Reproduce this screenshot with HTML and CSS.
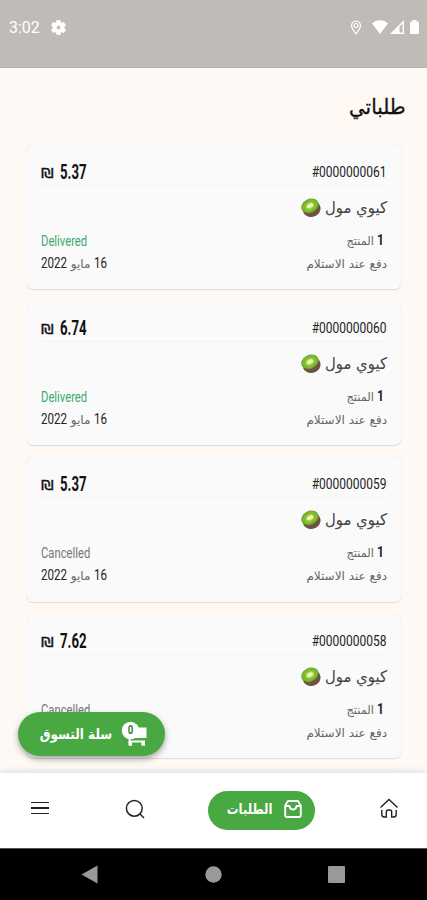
FILE: index.html
```html
<!DOCTYPE html>
<html lang="ar" dir="rtl">
<head>
  <meta charset="UTF-8" />
  <title>طلباتي</title>
  <link rel="stylesheet" href="styles.css">
</head>
<body>
  <svg class="defs" width="0" height="0">
    <defs>
      <symbol id="kiwi" viewBox="0 0 20 20">
        <path fill="#705044" d="M2 14c2 4 6 5.500 10 4.800 5-.800 7.800-5 7.500-9-.200-2-1-3.500-2.500-4.800z" />
        <ellipse cx="9" cy="8" rx="9" ry="7" transform="rotate(-27 9 8)" fill="#5b8f22" />
        <ellipse cx="9" cy="7.700" rx="8.300" ry="6.200" transform="rotate(-27 9 7.700)" fill="#7dbb2c" />
        <ellipse cx="9" cy="7.800" rx="4.600" ry="3.300" transform="rotate(-27 9 7.800)" fill="#a9d552" />
        <ellipse cx="9" cy="7.800" rx="3.200" ry="2" transform="rotate(-27 9 7.800)" fill="#f1f3b4" />
      </symbol>
    </defs>
  </svg>

  <div class="screen">
    <header class="status-bar" dir="ltr">
      <span class="clock">3:02</span>
      <svg class="gear" width="15" height="15" viewBox="2 2 20 20"><path fill="#fff" stroke="#fff" d="M19.140 12.940c.040-.300.060-.610.060-.940s-.020-.640-.070-.940l2.030-1.580a.5.5 0 0 0 .120-.610l-1.920-3.320a.5.5 0 0 0-.590-.220l-2.390.960a7 7 0 0 0-1.620-.940l-.360-2.540A.5.5 0 0 0 13.920 2.400h-3.840a.5.5 0 0 0-.480.410L9.240 5.350a7 7 0 0 0-1.620.940l-2.390-.960a.5.5 0 0 0-.590.220L2.720 8.870a.5.5 0 0 0 .120.610l2.030 1.580a6 6 0 0 0 0 1.880l-2.030 1.580a.5.5 0 0 0-.120.610l1.920 3.320c.120.220.370.290.590.220l2.390-.960a7 7 0 0 0 1.620.940l.360 2.540c.050.240.240.410.480.410h3.840a.5.5 0 0 0 .480-.410l.360-2.540a7 7 0 0 0 1.620-.940l2.390.960c.220.080.470 0 .590-.220l1.920-3.320a.5.5 0 0 0-.120-.610zM12 15a3 3 0 1 1 0-6 3 3 0 0 1 0 6z"/></svg>
      <span class="status-space"></span>
      <svg class="pin" width="12" height="15" viewBox="0 0 12 15"><path fill="none" stroke="#fff" stroke-width="1.300" d="M6 13.800C3.500 10.800 1.500 8.200 1.500 5.600a4.500 4.500 0 0 1 9 0c0 2.600-2 5.200-4.500 8.200z"/><circle cx="6" cy="5.500" r="2" fill="none" stroke="#fff" stroke-width="1.200"/></svg>
      <svg class="wifi" width="16" height="14" viewBox="0 0 16 14"><path fill="#fff" d="M0 3.500C4.500-.800 11.500-.800 16 3.500L8 14z"/></svg>
      <svg class="signal" width="14" height="14" viewBox="0 0 14 14"><path fill="#fff" d="M0 14 14 0v14z"/><path fill="#bfbbb6" d="M9.500 6.500 12.600 3.400v9.200H9.500z"/></svg>
      <svg class="battery" width="9" height="14" viewBox="0 0 9 14"><path fill="#fff" d="M2.500 0h4v1.500H8q1 0 1 1V13q0 1-1 1H1q-1 0-1-1V2.500q0-1 1-1h1.500z"/></svg>
    </header>

    <main class="orders">
      <h1><span>طلباتي</span></h1>

      <article class="order">
        <div class="order-top">
          <span class="order-id" dir="ltr">#0000000061</span>
          <span class="price" dir="ltr"><b>₪</b> <span>5.37</span></span>
        </div>
        <div class="store"><span>كيوي مول</span><svg class="kiwi"><use href="#kiwi" /></svg></div>
        <div class="row">
          <span class="count"><b>1</b> <span>المنتج</span></span>
          <span class="state delivered" dir="ltr">Delivered</span>
        </div>
        <div class="row">
          <span class="payment">دفع عند الاستلام</span>
          <span class="date"><b class="day">16</b> <i>مايو</i> <b>2022</b></span>
        </div>
      </article>

      <article class="order">
        <div class="order-top">
          <span class="order-id" dir="ltr">#0000000060</span>
          <span class="price" dir="ltr"><b>₪</b> <span>6.74</span></span>
        </div>
        <div class="store"><span>كيوي مول</span><svg class="kiwi"><use href="#kiwi" /></svg></div>
        <div class="row">
          <span class="count"><b>1</b> <span>المنتج</span></span>
          <span class="state delivered" dir="ltr">Delivered</span>
        </div>
        <div class="row">
          <span class="payment">دفع عند الاستلام</span>
          <span class="date"><b class="day">16</b> <i>مايو</i> <b>2022</b></span>
        </div>
      </article>

      <article class="order">
        <div class="order-top">
          <span class="order-id" dir="ltr">#0000000059</span>
          <span class="price" dir="ltr"><b>₪</b> <span>5.37</span></span>
        </div>
        <div class="store"><span>كيوي مول</span><svg class="kiwi"><use href="#kiwi" /></svg></div>
        <div class="row">
          <span class="count"><b>1</b> <span>المنتج</span></span>
          <span class="state" dir="ltr">Cancelled</span>
        </div>
        <div class="row">
          <span class="payment">دفع عند الاستلام</span>
          <span class="date"><b class="day">16</b> <i>مايو</i> <b>2022</b></span>
        </div>
      </article>

      <article class="order">
        <div class="order-top">
          <span class="order-id" dir="ltr">#0000000058</span>
          <span class="price" dir="ltr"><b>₪</b> <span>7.62</span></span>
        </div>
        <div class="store"><span>كيوي مول</span><svg class="kiwi"><use href="#kiwi" /></svg></div>
        <div class="row">
          <span class="count"><b>1</b> <span>المنتج</span></span>
          <span class="state" dir="ltr">Cancelled</span>
        </div>
        <div class="row">
          <span class="payment">دفع عند الاستلام</span>
        </div>
      </article>

      <article class="order"></article>
    </main>

    <button type="button" class="cart-button">
      <span class="cart-icon">
        <svg width="28" height="26" viewBox="0 0 28 26"><circle cx="9.500" cy="9.500" r="8.700" fill="#fff"/><path fill="#fff" d="M12 6.500h13.500v10.500H12z"/><path fill="none" stroke="#fff" stroke-width="1.800" d="M8.500 16v4.500H24"/><path fill="#fff" d="M7.500 20H11v4.800H7.500zM20.500 20H24v4.800h-3.500z"/></svg>
        <span class="badge">0</span>
      </span>
      <span class="cart-label">سلة التسوق</span>
    </button>

    <nav class="tabs">
      <a class="tab home"><svg width="20" height="22" viewBox="0 0 20 22"><path fill="none" stroke="#222" stroke-width="1.400" d="M1.500 10.500 10 2.500l8.500 8M2.800 13v4.500q0 2.500 2.500 2.500h2V15q0-2 2-2h1.400q2 0 2 2v5h2q2.500 0 2.500-2.500V13"/></svg></a>
      <a class="tab active">
        <svg width="18" height="18" viewBox="0 0 18 18"><path fill="none" stroke="#fff" stroke-width="1.900" stroke-linejoin="round" d="M4 1h10l2.800 4.500V15q0 2-2 2H3.200q-2 0-2-2V5.500zM1.200 6h4.300Q6 9.500 9 9.500T12.500 6h4.300"/></svg>
        <span>الطلبات</span>
      </a>
      <a class="tab search"><svg width="20" height="20" viewBox="0 0 20 20"><circle cx="9.300" cy="9.300" r="7.900" fill="none" stroke="#222" stroke-width="1.500"/><path stroke="#222" stroke-width="1.500" d="m15 15 4 4"/></svg></a>
      <a class="tab menu"><i></i><i></i><i></i></a>
    </nav>

    <footer class="system-bar" dir="ltr">
      <svg width="17" height="19" viewBox="0 0 17 19"><path fill="#999" d="M16.500 .500v18L.500 9.500z"/></svg>
      <svg width="17" height="17" viewBox="0 0 17 17"><circle cx="8.500" cy="8.500" r="8.200" fill="#999"/></svg>
      <svg width="17" height="17" viewBox="0 0 17 17"><rect width="17" height="17" rx="1" fill="#999"/></svg>
    </footer>
  </div>
</body>
</html>
```
FILE: styles.css
```css
* {
  box-sizing: border-box;
}

body {
  margin: 0;
  font-family: Roboto, "DejaVu Sans", sans-serif;
  color: #222;
}

.defs {
  position: absolute;
}

.screen {
  position: relative;
  display: flex;
  flex-direction: column;
  width: 427px;
  height: 900px;
  overflow: hidden;
  background: #fef9f5;
}

.status-bar {
  display: flex;
  align-items: center;
  flex: none;
  height: 68px;
  padding: 0 8px 13px 9px;
  background: #bfbbb6;
  border-bottom: 1px solid #b5b1ac;
}

.clock {
  font: 16px/20px Roboto, sans-serif;
  color: #fff;
  width: 42px;
  padding-top: 2px;
}

.status-space {
  flex: 1;
}

.pin { margin-right: 10px; }
.wifi { margin-right: 2px; }
.signal { margin-right: 6px; }

.orders {
  flex: 1;
  min-height: 0;
  overflow: hidden;
  padding: 0 26px 0 27px;
}

h1 {
  height: 77px;
  margin: 0 -5px 0 0;
  padding-top: 23px;
  font: 500 21px/32px "DejaVu Sans", sans-serif;
  color: #111;
}

h1 span {
  display: inline-block;
  transform: scaleX(0.95);
  transform-origin: right;
  -webkit-text-stroke: 0.3px #111;
}

.order {
  height: 144.2px;
  margin-bottom: 12px;
  padding: 14px 14px 0 14px;
  background: #fafafa;
  border-radius: 6px;
  box-shadow: 0 0 1px rgba(0, 0, 0, 0.12), 0 1px 1px rgba(0, 0, 0, 0.1);
}

.order-top {
  display: flex;
  justify-content: space-between;
  height: 27px;
  line-height: 27px;
  border-bottom: 1px solid #f2f2f2;
}

.order-id,
.price,
.state,
.count,
.payment,
.date,
.store span {
  white-space: nowrap;
}

/* Latin text and digits are set condensed */
.order-id {
  font-size: 15px;
  transform: scaleX(0.8);
  transform-origin: right;
}

.price {
  display: flex;
  width: 45px;
  font-size: 20px;
  font-weight: bold;
  color: #111;
}

.price span {
  transform: scaleX(0.66);
  transform-origin: left;
}

.price b {
  flex: none;
  width: 19px;
  font: 14px/29px "DejaVu Sans", sans-serif;
  transform: scaleX(1.15);
  transform-origin: left;
  -webkit-text-stroke: 0.3px #111;
}

.store {
  display: flex;
  align-items: center;
  height: 44px;
  font: 16px/44px "DejaVu Sans", sans-serif;
  color: #444;
}

.store span {
  width: 66px;
  transform: scaleX(0.93);
  transform-origin: right;
}

.kiwi {
  width: 20px;
  height: 20px;
}

.row {
  display: flex;
  justify-content: space-between;
  height: 23px;
  line-height: 23px;
}

.count,
.payment {
  font: 12px/23px "DejaVu Sans", sans-serif;
  color: #666;
}

.count {
  display: flex;
  padding-right: 3px;
}

.count b {
  width: 10px;
  font: bold 15px/21px Roboto, sans-serif;
  color: #222;
  transform: scaleX(0.8);
  transform-origin: right;
}

.count span {
  transform: scaleX(0.95);
  transform-origin: right;
}

.state {
  font-size: 15px;
  color: #777;
  transform: scaleX(0.75);
  transform-origin: left;
}

.delivered {
  color: #3daa6d;
}

.date {
  display: flex;
  direction: rtl;
  line-height: 21px;
}

.date b {
  width: 26px;
  direction: ltr;
  font-size: 15px;
  font-weight: normal;
  transform: scaleX(0.77);
  transform-origin: left;
}

.date .day {
  width: 12px;
}

.date i {
  width: 27px;
  text-align: center;
  font: 12px/22px "DejaVu Sans", sans-serif;
  color: #666;
}

.cart-button {
  position: absolute;
  left: 18px;
  top: 712px;
  z-index: 2;
  display: flex;
  align-items: center;
  gap: 9px;
  width: 147px;
  height: 44px;
  padding: 0 16px;
  border: none;
  border-radius: 22px;
  background: #48a841;
  color: #fff;
  box-shadow: 0 3px 6px rgba(0, 0, 0, 0.35);
}

.cart-icon {
  position: relative;
  width: 28px;
  height: 26px;
  flex: none;
}

.badge {
  position: absolute;
  left: 6px;
  top: 3px;
  font: bold 12px/13px Roboto, sans-serif;
  color: #37803a;
  transform: scaleX(0.8);
}

.cart-label {
  font: bold 14px/30px "DejaVu Sans", sans-serif;
  white-space: nowrap;
  transform: scaleX(0.86);
  transform-origin: right;
}

.tabs {
  position: relative;
  display: flex;
  align-items: center;
  flex: none;
  height: 75px;
  padding: 0 28px 0 31px;
  background: #fff;
  justify-content: space-between;
  box-shadow: 0 -1px 7px rgba(0, 0, 0, 0.13);
}

.tab {
  display: flex;
  padding-bottom: 5px;
}

.active {
  align-items: center;
  gap: 12px;
  width: 107px;
  height: 39px;
  padding: 0 13px 4px;
  border-radius: 20px;
  background: #48a841;
  color: #fff;
  font: bold 14px/30px "DejaVu Sans", sans-serif;
}

.active svg {
  flex: none;
}

.active span {
  transform: scaleX(0.84);
  transform-origin: right;
}

.search {
  padding-bottom: 3px;
}

.menu {
  flex-direction: column;
  gap: 4px;
  width: 18px;
  margin-right: 12px;
}

.menu i {
  height: 1.500px;
  background: #222;
}

.system-bar {
  display: flex;
  justify-content: space-between;
  align-items: center;
  flex: none;
  height: 52px;
  padding: 0 82px 0 81px;
  background: #000;
  border-top: 1px solid #555;
}
```
